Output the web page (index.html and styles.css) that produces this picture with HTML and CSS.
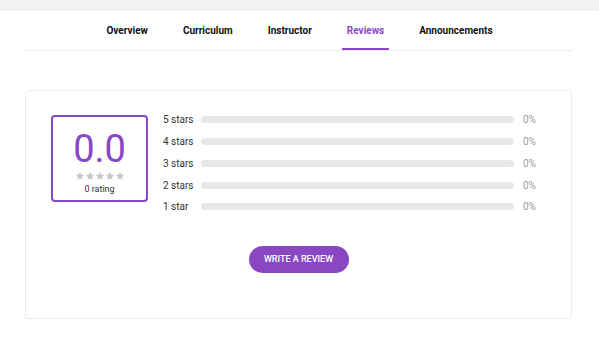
FILE: index.html
```html
<!DOCTYPE html>
<html lang="en">
<head>
  <meta charset="UTF-8">
  <meta name="viewport" content="width=device-width, initial-scale=1.0">
  <title>Course Reviews</title>
  <link rel="stylesheet" href="styles.css">
</head>
<body>
  <!-- top strip -->
  <div class="top-strip"></div>

  <div class="container">
    <!-- course tabs -->
    <nav class="tabs">
      <a href="#" class="tab">Overview</a>
      <a href="#" class="tab">Curriculum</a>
      <a href="#" class="tab">Instructor</a>
      <a href="#" class="tab active">Reviews</a>
      <a href="#" class="tab">Announcements</a>
    </nav>

    <!-- reviews card -->
    <div class="review-card">
      <div class="summary">
        <div class="rating-box">
          <div class="rating-value">0.0</div>
          <div class="stars">
            <svg viewBox="0 0 24 24"><path d="M12 2l3.1 6.3 6.9 1-5 4.9 1.2 6.8L12 17.8 5.8 21l1.2-6.8-5-4.9 6.9-1z"/></svg>
            <svg viewBox="0 0 24 24"><path d="M12 2l3.1 6.3 6.9 1-5 4.9 1.2 6.8L12 17.8 5.8 21l1.2-6.8-5-4.9 6.9-1z"/></svg>
            <svg viewBox="0 0 24 24"><path d="M12 2l3.1 6.3 6.9 1-5 4.9 1.2 6.8L12 17.8 5.8 21l1.2-6.8-5-4.9 6.9-1z"/></svg>
            <svg viewBox="0 0 24 24"><path d="M12 2l3.1 6.3 6.9 1-5 4.9 1.2 6.8L12 17.8 5.8 21l1.2-6.8-5-4.9 6.9-1z"/></svg>
            <svg viewBox="0 0 24 24"><path d="M12 2l3.1 6.3 6.9 1-5 4.9 1.2 6.8L12 17.8 5.8 21l1.2-6.8-5-4.9 6.9-1z"/></svg>
          </div>
          <div class="rating-count">0 rating</div>
        </div>

        <div class="breakdown">
          <div class="row">
            <span class="row-label">5 stars</span>
            <div class="bar"><div class="bar-fill" style="width: 0%;"></div></div>
            <span class="row-pct">0%</span>
          </div>
          <div class="row">
            <span class="row-label">4 stars</span>
            <div class="bar"><div class="bar-fill" style="width: 0%;"></div></div>
            <span class="row-pct">0%</span>
          </div>
          <div class="row">
            <span class="row-label">3 stars</span>
            <div class="bar"><div class="bar-fill" style="width: 0%;"></div></div>
            <span class="row-pct">0%</span>
          </div>
          <div class="row">
            <span class="row-label">2 stars</span>
            <div class="bar"><div class="bar-fill" style="width: 0%;"></div></div>
            <span class="row-pct">0%</span>
          </div>
          <div class="row">
            <span class="row-label">1 star</span>
            <div class="bar"><div class="bar-fill" style="width: 0%;"></div></div>
            <span class="row-pct">0%</span>
          </div>
        </div>
      </div>

      <div class="actions">
        <button class="review-button">Write a review</button>
      </div>
    </div>
  </div>
</body>
</html>
```

FILE: styles.css
```css
:root {
  --main-color: #8a47c4;
  --text-color: #222;
  --muted-color: #999;
  --line-color: #ececec;
}

body {
  font-family: Roboto, "Liberation Sans", Arial, sans-serif;
  background-color: #fff;
  color: var(--text-color);
  margin: 0;
  padding: 0;
}

.top-strip {
  height: 11px;
  background-color: #f2f2f2;
}

.container {
  width: 547px;
  margin: 0 25px;
}

/* tabs */
.tabs {
  display: flex;
  justify-content: center;
  gap: 25px;
  padding-left: 2px;
  border-bottom: 1px solid var(--line-color);
}

.tab {
  display: block;
  height: 37px;
  line-height: 40px;
  padding: 0 5px;
  font-size: 10px;
  font-weight: 700;
  color: #111;
  text-decoration: none;
  border-bottom: 2px solid transparent;
}

.tab.active {
  color: var(--main-color);
  border-bottom-color: var(--main-color);
}

/* card */
.review-card {
  margin-top: 39px;
  border: 1px solid var(--line-color);
  border-radius: 3px;
  padding: 18px 16px 45px 25px;
}

.summary {
  display: flex;
  align-items: flex-start;
  gap: 15px;
}

.rating-box {
  width: 93px;
  height: 83px;
  margin-top: 6px;
  border: 2px solid var(--main-color);
  border-radius: 4px;
  text-align: center;
}

.rating-value {
  font-size: 38px;
  font-weight: 400;
  line-height: 38px;
  margin-top: 13px;
  color: var(--main-color);
}

.stars {
  display: flex;
  justify-content: center;
  margin-top: 3px;
}

.stars svg {
  width: 10px;
  height: 10px;
  fill: #c9c9c9;
}

.rating-count {
  font-size: 9px;
  margin-top: 3px;
  color: #333;
}

.breakdown {
  flex: 1;
}

.row {
  display: flex;
  align-items: center;
  height: 21.75px;
}

.row-label {
  width: 38px;
  font-size: 10px;
  color: #333;
}

.bar {
  flex: 1;
  height: 7px;
  border-radius: 4px;
  background-color: #e8e8e8;
  overflow: hidden;
}

.bar-fill {
  height: 100%;
  background-color: var(--main-color);
}

.row-pct {
  width: 32px;
  margin-left: 9px;
  font-size: 10px;
  color: var(--muted-color);
}

.actions {
  display: flex;
  justify-content: center;
  margin-top: 28px;
  padding-right: 9px;
}

.review-button {
  width: 100px;
  height: 27px;
  border: none;
  border-radius: 14px;
  background-color: var(--main-color);
  color: #fff;
  font-family: inherit;
  font-size: 9px;
  font-weight: 500;
  text-transform: uppercase;
  cursor: pointer;
}
```
